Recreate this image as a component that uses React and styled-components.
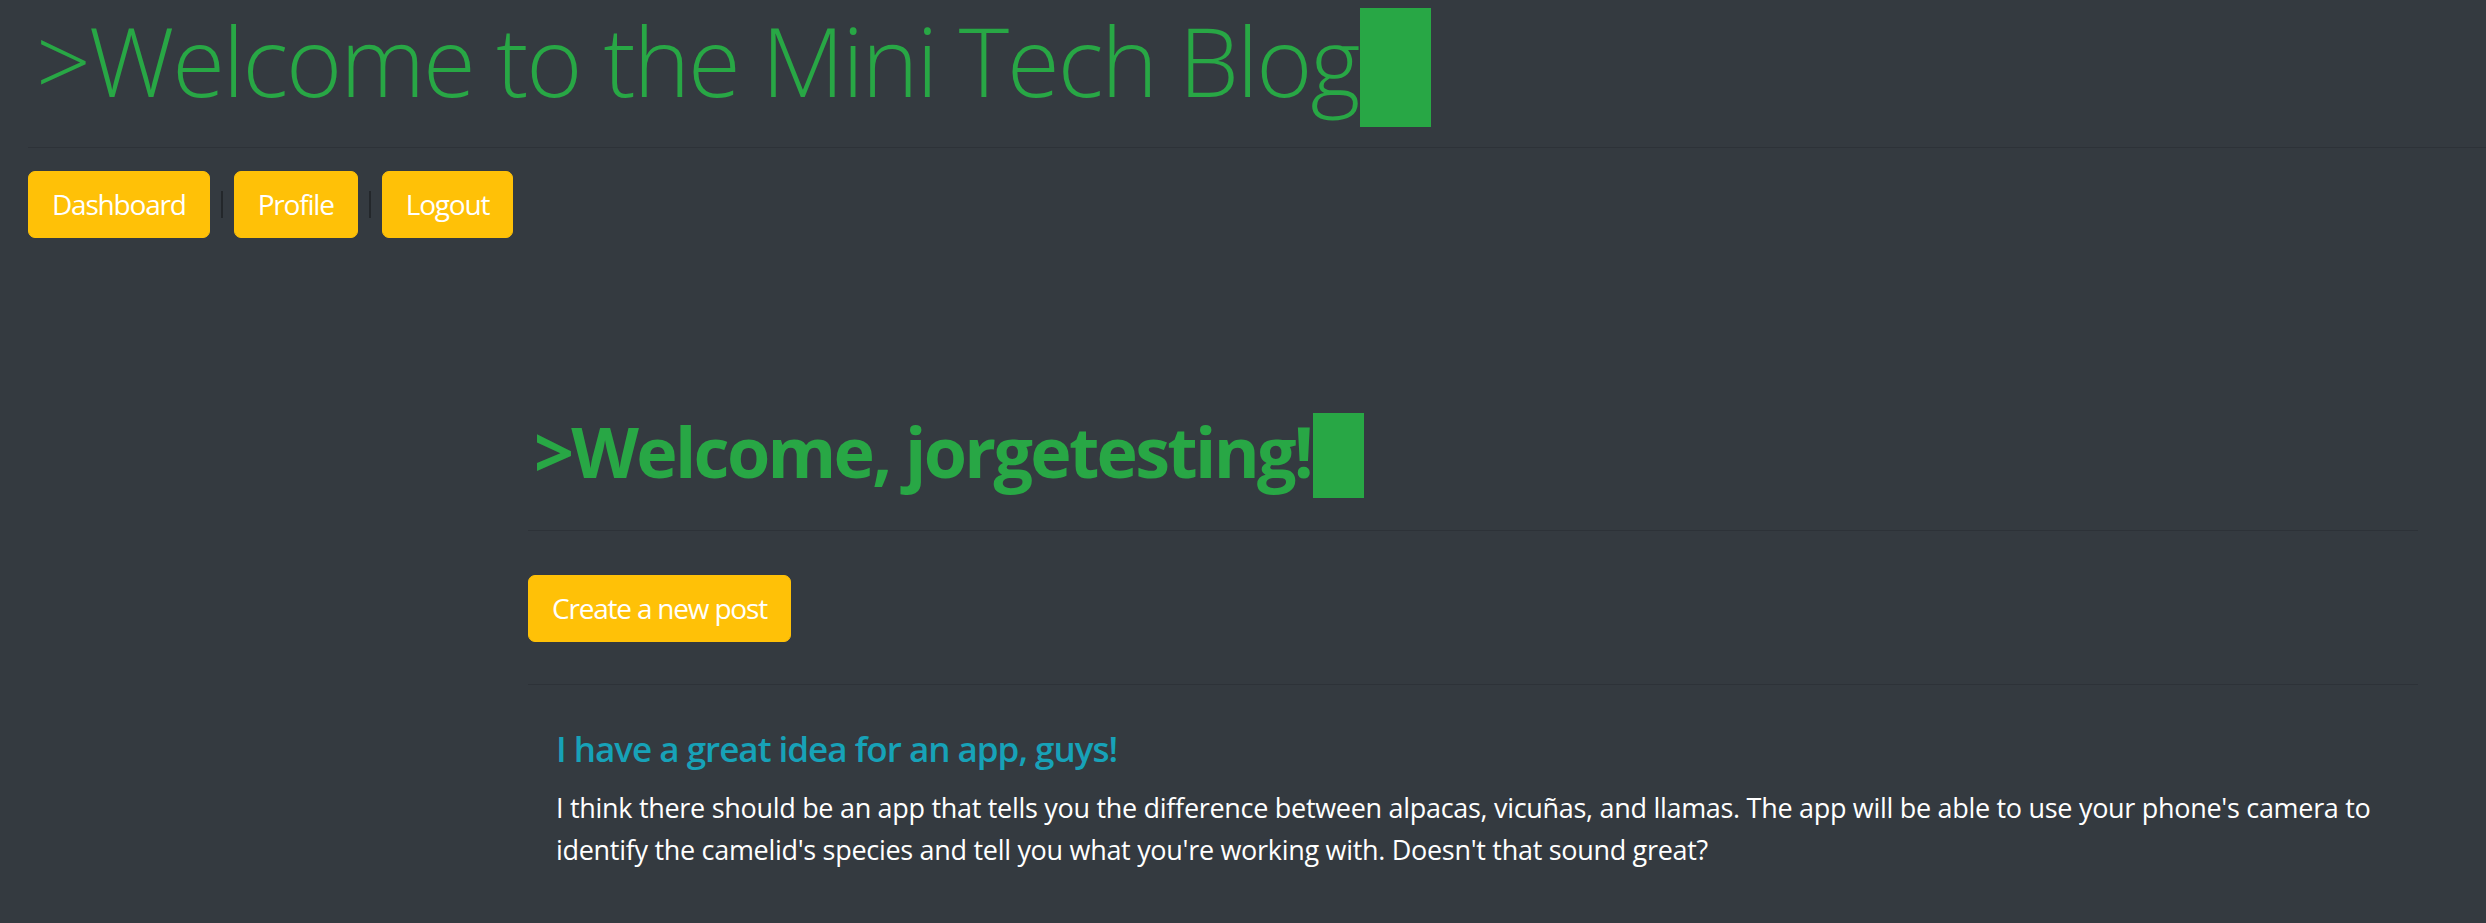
import React from 'react';
import styled, { createGlobalStyle } from 'styled-components';

const GlobalStyle = createGlobalStyle`
  html, body {
    margin: 0;
    padding: 0;
    background-color: #343a40;
  }
  body {
    font-family: 'Open Sans', 'Noto Sans', sans-serif;
    color: #fff;
  }
`;

const App = () => {
  const navItems = ['Dashboard', 'Profile', 'Logout'];

  return (
    <Page>
      <GlobalStyle />
      <Header>
        <SiteTitle>
          &gt;Welcome to the Mini Tech Blog
          <Cursor $w={71} $h={119} $drop={30} />
        </SiteTitle>
      </Header>
      <Divider />
      <Nav>
        {navItems.map((item, i) => (
          <React.Fragment key={item}>
            {i > 0 && <NavSeparator />}
            <YellowButton>{item}</YellowButton>
          </React.Fragment>
        ))}
      </Nav>

      <Main>
        <Greeting>
          &gt;Welcome, jorgetesting!
          <Cursor $w={51} $h={85} $drop={20} />
        </Greeting>
        <Divider />
        <ButtonRow>
          <YellowButton>Create a new post</YellowButton>
        </ButtonRow>
        <Divider />
        <Post>
          <PostTitle>I have a great idea for an app, guys!</PostTitle>
          <PostBody>
            I think there should be an app that tells you the difference between alpacas, vicuñas, and llamas. The app will be able to use your phone's camera to identify the camelid's species and tell you what you're working with. Doesn't that sound great?
          </PostBody>
        </Post>
      </Main>
    </Page>
  );
};

const Page = styled.div`
  min-height: 100vh;
  background-color: #343a40;
  overflow: hidden;
`;

const Header = styled.header`
  padding: 0 0 0 36px;
`;

const SiteTitle = styled.h1`
  margin: 0;
  font-size: 96px;
  font-weight: 300;
  line-height: 120px;
  letter-spacing: -2.1px;
  color: #28a745;
  white-space: nowrap;
`;

const Cursor = styled.span`
  display: inline-block;
  width: ${({ $w }) => $w}px;
  height: ${({ $h }) => $h}px;
  margin-left: 2px;
  vertical-align: -${({ $drop }) => $drop}px;
  background-color: #28a745;
`;

const Divider = styled.hr`
  margin: 20px 0 0 28px;
  border: 0;
  border-top: 1.5px solid rgba(0, 0, 0, 0.12);
`;

const Nav = styled.nav`
  display: flex;
  align-items: center;
  gap: 11px;
  padding: 23px 0 0 28px;
`;

const NavSeparator = styled.span`
  width: 2px;
  height: 27px;
  background-color: #23272b;
`;

const YellowButton = styled.button`
  padding: 10px 23px;
  font-family: 'Open Sans', 'Noto Sans', sans-serif;
  font-size: 28px;
  line-height: 45px;
  letter-spacing: -1.2px;
  color: #fff;
  background-color: #ffc107;
  border: 1px solid #ffc107;
  border-radius: 7px;
  cursor: pointer;
`;

const Main = styled.main`
  width: 1890px;
  margin-left: 528px;
  padding-top: 171px;

  ${Divider} {
    margin: 32px 0 0 0;
  }
`;

const Greeting = styled.h2`
  margin: 0;
  padding-left: 6px;
  font-size: 70px;
  font-weight: 700;
  line-height: 84px;
  letter-spacing: -2.7px;
  color: #28a745;
  white-space: nowrap;
`;

const ButtonRow = styled.div`
  display: flex;
  padding: 44px 0 10px;
`;

const Post = styled.article`
  padding: 43px 28px;
`;

const PostTitle = styled.h4`
  margin: 0 0 17px;
  font-size: 35px;
  font-weight: 600;
  line-height: 42px;
  letter-spacing: -1px;
  color: #17a2b8;
`;

const PostBody = styled.p`
  margin: 0;
  font-size: 27px;
  line-height: 42px;
  letter-spacing: -0.3px;
  color: #fff;
`;

export default App;
